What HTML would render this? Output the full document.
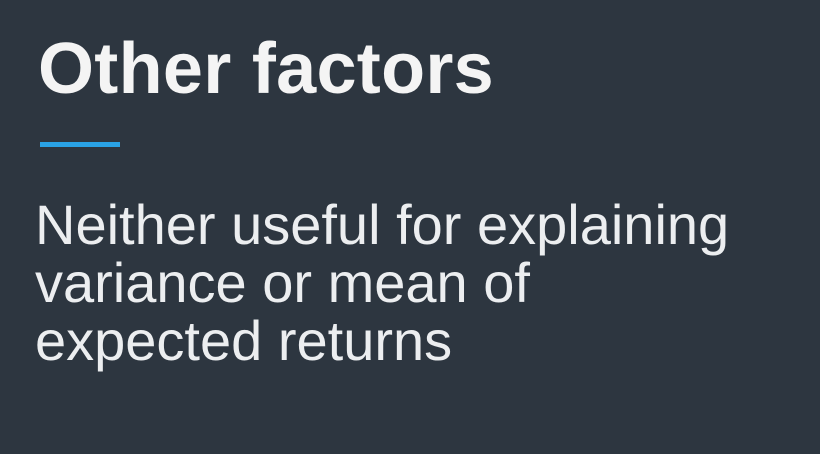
<!DOCTYPE html>
<html><head><meta charset="utf-8"><style>
html,body{margin:0;padding:0}
body{width:820px;height:454px;background:#2d3640;position:relative;overflow:hidden;font-family:"Liberation Sans",sans-serif}
.t{position:absolute;left:38px;top:33px;font-size:72px;line-height:72px;font-weight:bold;color:#f4f4f4;white-space:nowrap;letter-spacing:0.3px}
.bar{position:absolute;left:40px;top:142px;width:80px;height:5px;background:#2aa3e6}
.b{position:absolute;left:35px;top:196px;font-size:56px;line-height:58px;color:#eceef0;white-space:nowrap}
</style></head><body>
<div class="t">Other factors</div>
<div class="bar"></div>
<div class="b">Neither useful for explaining<br>variance or mean of<br>expected returns</div>
</body></html>
